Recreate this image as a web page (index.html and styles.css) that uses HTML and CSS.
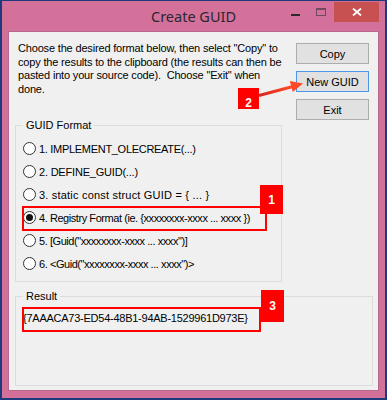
FILE: index.html
```html
<!DOCTYPE html>
<html lang="en">
<head>
    <meta charset="UTF-8">
    <title>Create GUID</title>
    <link rel="stylesheet" href="styles.css">
</head>
<body>
    <div class="window">
        <!-- Title bar -->
        <div class="titlebar">
            <span></span>
            <div class="title">Create GUID</div>
            <div class="controls">
                <span class="ctl min"><i></i></span>
                <span class="ctl max"><i></i></span>
                <span class="ctl close">
                    <svg width="10" height="8" viewBox="0 0 10 8">
                        <path d="M1 0.5 L9 7.5 M9 0.5 L1 7.5" stroke="#fff" stroke-width="1.8" fill="none"/>
                    </svg>
                </span>
            </div>
        </div>

        <!-- Dialog body -->
        <div class="client">
            <p class="intro">Choose the desired format below, then select "Copy" to<br>copy the results to the clipboard (the results can then be<br>pasted into your source code).&nbsp; Choose "Exit" when<br>done.</p>

            <div class="buttons">
                <button class="btn">Copy</button>
                <button class="btn default">New GUID</button>
                <button class="btn">Exit</button>
            </div>

            <fieldset class="group formats">
                <legend>GUID Format</legend>
                <label class="option opt-1"><span class="radio"></span>1. IMPLEMENT_OLECREATE(...)</label>
                <label class="option opt-2"><span class="radio"></span>2. DEFINE_GUID(...)</label>
                <label class="option opt-3"><span class="radio"></span>3. static const struct GUID = { ... }</label>
                <label class="option opt-x"><span class="radio checked"></span>4. Registry Format (ie. {xxxxxxxx-xxxx ... xxxx })</label>
                <label class="option opt-x"><span class="radio"></span>5. [Guid("xxxxxxxx-xxxx ... xxxx")]</label>
                <label class="option opt-x"><span class="radio"></span>6. &lt;Guid("xxxxxxxx-xxxx ... xxxx")&gt;</label>
            </fieldset>

            <fieldset class="group result">
                <legend>Result</legend>
                <div class="guid">{7AAACA73-ED54-48B1-94AB-1529961D973E}</div>
            </fieldset>
        </div>

        <!-- Screenshot annotations -->
        <div class="mark box-1"></div>
        <div class="mark box-3"></div>
        <div class="tag tag-1">1</div>
        <div class="tag tag-2">2</div>
        <div class="tag tag-3">3</div>
        <svg class="arrow" width="387" height="400" viewBox="0 0 387 400">
            <defs>
                <linearGradient id="arrowFill" x1="0" y1="0" x2="1" y2="0">
                    <stop offset="0" stop-color="#d8281c"/>
                    <stop offset="1" stop-color="#ff4a2a"/>
                </linearGradient>
            </defs>
            <path d="M257 94.5 L290 85.8" stroke="url(#arrowFill)" stroke-width="3" fill="none"/>
            <path d="M301 82.5 L290.8 91 L287.8 80 Z" fill="#ff4a2a"/>
        </svg>
    </div>
</body>
</html>
```

FILE: styles.css
```css
* {
    margin: 0;
    padding: 0;
    box-sizing: border-box;
}

body {
    font-family: 'Liberation Sans', Arial, sans-serif;
    font-size: 11px;
    color: #000;
    background: #fff;
}

.window {
    position: relative;
    width: 387px;
    height: 400px;
    display: flex;
    flex-direction: column;
    background: #d3719a;
    border-style: solid;
    border-color: #1d3a7c;
    border-width: 1px 2px 2px 2px;
    padding: 0 6px 7px 6px;
    overflow: hidden;
}

/* Title bar */
.titlebar {
    height: 30px;
    display: grid;
    grid-template-columns: 1fr auto 1fr;
}

.title {
    font-family: 'Noto Sans', 'Open Sans', sans-serif;
    font-size: 14.5px;
    line-height: 30px;
    color: #2b2630;
}

.controls {
    display: flex;
    justify-content: flex-end;
    align-items: flex-start;
    padding-top: 1px;
}

.ctl {
    width: 26px;
    height: 20px;
    display: flex;
    justify-content: center;
}

.ctl.min i {
    width: 9px;
    height: 2px;
    margin-top: 12px;
    background: #2a2a2a;
}

.ctl.max i {
    width: 10px;
    height: 8px;
    margin-top: 6px;
    border: 1px solid #6f4a5e;
    border-top-width: 2px;
}

.ctl.close {
    width: 45px;
    background: #c75050;
    align-items: center;
}

/* Dialog body */
.client {
    flex: 1;
    background: #f0f0f0;
    border: 1px solid #b8688c;
    padding: 10px 5px 4px 6px;
    display: grid;
    grid-template-columns: 267px 1fr;
    grid-template-rows: auto auto 1fr;
}

.intro {
    grid-column: 1;
    grid-row: 1;
    line-height: 13.5px;
    letter-spacing: -0.17px;
    padding-left: 3px;
    margin-bottom: 23px;
    white-space: nowrap;
}

.buttons {
    grid-column: 2;
    grid-row: 1 / 3;
    justify-self: end;
    display: flex;
    flex-direction: column;
    gap: 7px;
    margin-top: 1px;
    margin-right: 4px;
}

.btn {
    width: 73px;
    height: 21px;
    font-family: 'Liberation Sans', Arial, sans-serif;
    font-size: 11px;
    color: #000;
    background: #e1e1e1;
    border: 1px solid #adadad;
}

.btn.default {
    border-color: #4a97e4;
}

/* Group boxes */
.group {
    min-width: 0;
    border: 1px solid #dcdcdc;
    padding: 5px 0 6px 7px;
}

.group legend {
    padding: 0 3px;
    line-height: 13px;
}

.formats {
    grid-column: 1;
    grid-row: 2;
}

.result {
    grid-column: 1 / 3;
    grid-row: 3;
    margin-top: 8px;
    padding-top: 9px;
}

.option {
    height: 23px;
    display: flex;
    align-items: center;
    gap: 3px;
    white-space: nowrap;
}

.opt-1 { letter-spacing: -0.3px; }
.opt-2 { letter-spacing: -0.2px; }
.opt-3 { letter-spacing: 0.2px; }
.opt-x { letter-spacing: -0.44px; }

.radio {
    width: 13px;
    height: 13px;
    border: 1px solid #333;
    border-radius: 50%;
    background: #fff;
    display: flex;
    align-items: center;
    justify-content: center;
}

.radio.checked::after {
    content: '';
    width: 7px;
    height: 7px;
    border-radius: 50%;
    background: #111;
}

.guid {
    line-height: 13px;
    letter-spacing: -0.25px;
}

/* Annotations drawn over the screenshot */
.mark {
    position: absolute;
    border: 2px solid #ff0000;
}

.box-1 {
    left: 20px;
    top: 205px;
    width: 245px;
    height: 25px;
}

.box-3 {
    left: 20px;
    top: 306px;
    width: 239px;
    height: 25px;
}

.tag {
    position: absolute;
    background: #ff0000;
    color: #fff;
    font-family: 'Liberation Sans', Arial, sans-serif;
    font-weight: bold;
    font-size: 12px;
    display: flex;
    align-items: center;
    justify-content: center;
}

.tag-1 {
    left: 258px;
    top: 184px;
    width: 23px;
    height: 29px;
}

.tag-2 {
    left: 236px;
    top: 87px;
    width: 21px;
    height: 21px;
    padding-top: 8px;
}

.tag-3 {
    left: 259px;
    top: 289px;
    width: 23px;
    height: 32px;
}

.arrow {
    position: absolute;
    left: 0;
    top: 0;
    pointer-events: none;
}
```
